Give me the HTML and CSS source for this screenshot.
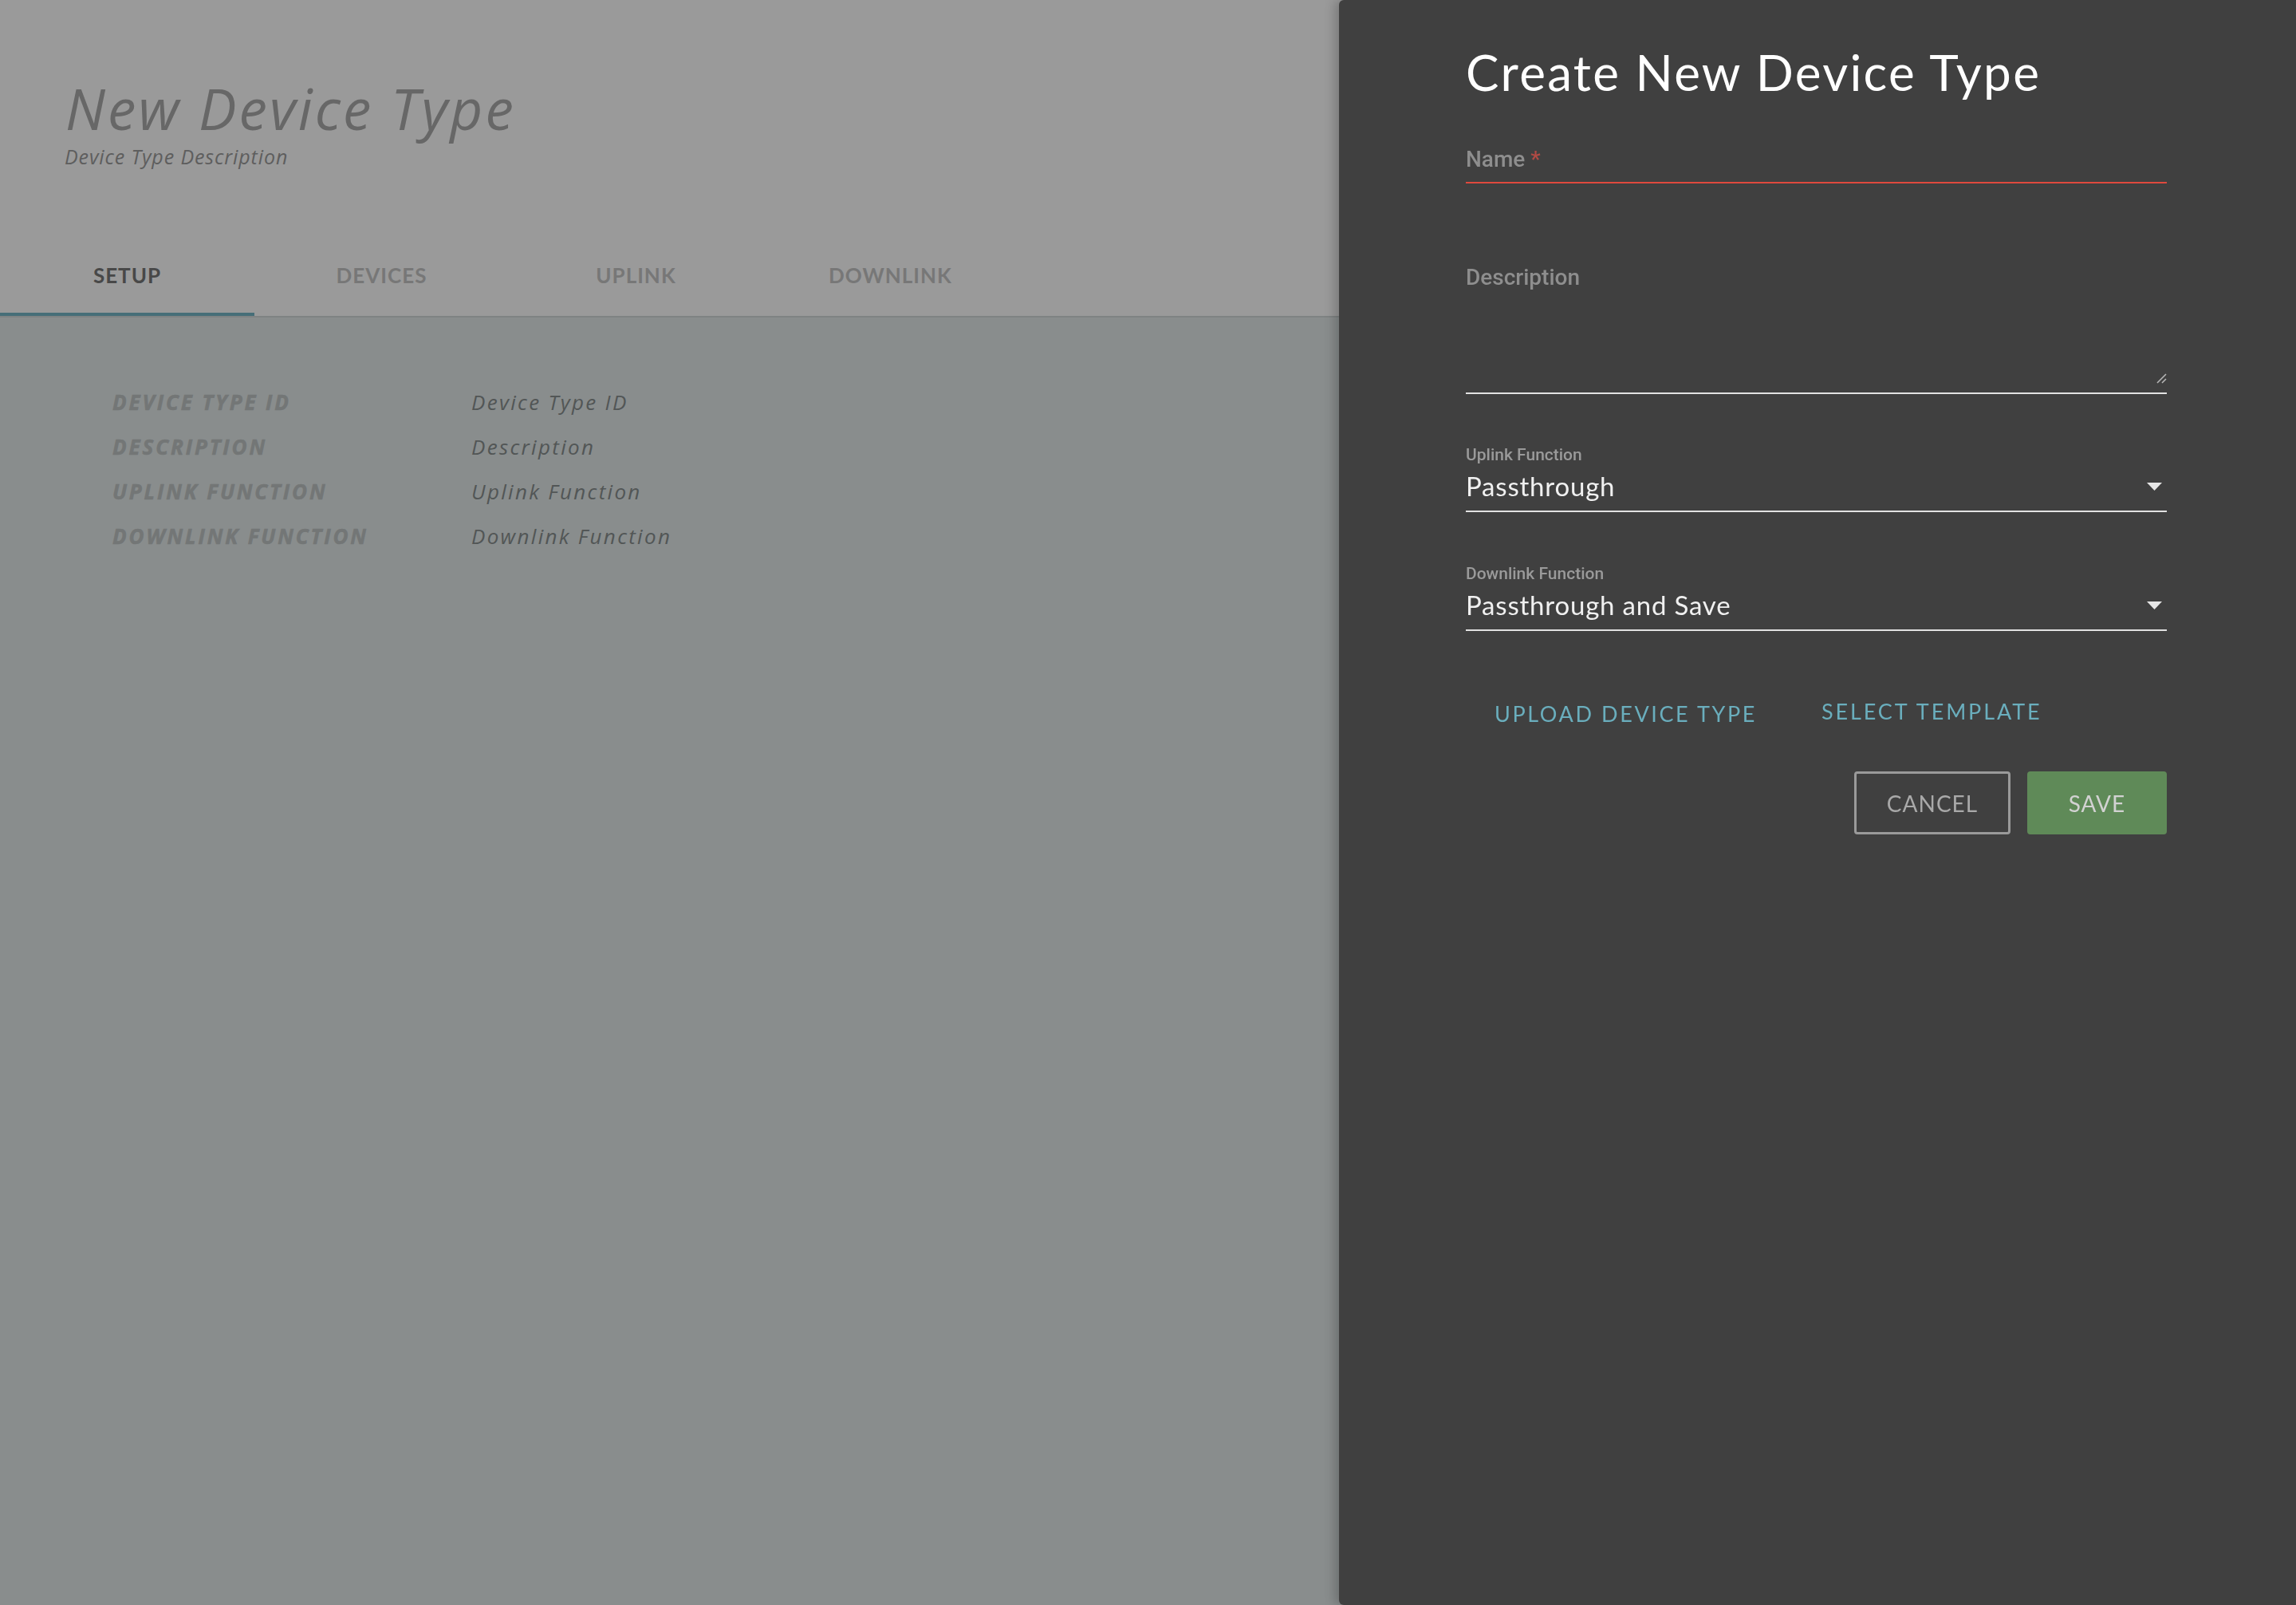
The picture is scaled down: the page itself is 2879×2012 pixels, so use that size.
FILE: index.html
```html
<!DOCTYPE html>
<html>
<head>
<meta charset="utf-8">
<title>New Device Type</title>
<link rel="stylesheet" href="styles.css">
</head>
<body>
<div class="page">
  <header class="header">
    <h1 class="title">New Device Type</h1>
    <div class="subtitle">Device Type Description</div>
    <nav class="tabs">
      <div class="tab active">SETUP</div>
      <div class="tab">DEVICES</div>
      <div class="tab">UPLINK</div>
      <div class="tab">DOWNLINK</div>
    </nav>
  </header>
  <main class="content">
    <div class="details">
      <div class="dlabel">DEVICE TYPE ID</div><div class="dvalue">Device Type ID</div>
      <div class="dlabel">DESCRIPTION</div><div class="dvalue">Description</div>
      <div class="dlabel">UPLINK FUNCTION</div><div class="dvalue">Uplink Function</div>
      <div class="dlabel">DOWNLINK FUNCTION</div><div class="dvalue">Downlink Function</div>
    </div>
  </main>
</div>

<aside class="drawer">
  <h2 class="drawer-title">Create New Device Type</h2>

  <div class="field field-name">
    <div class="flabel">Name<span class="req">*</span></div>
    <div class="finput error"></div>
  </div>

  <div class="field field-desc">
    <div class="flabel">Description</div>
    <div class="farea">
      <svg class="resize" width="14" height="14" viewBox="0 0 14 14"><path d="M13 2 L2 13 M13 8 L8 13" stroke="#b5b5b5" stroke-width="1.6" fill="none"/></svg>
    </div>
  </div>

  <div class="field field-select first">
    <div class="slabel">Uplink Function</div>
    <div class="svalue"><span>Passthrough</span><svg width="19" height="10" viewBox="0 0 19 10"><path d="M0 0 L19 0 L9.5 10 Z" fill="#e6e6e6"/></svg></div>
  </div>

  <div class="field field-select">
    <div class="slabel">Downlink Function</div>
    <div class="svalue"><span>Passthrough and Save</span><svg width="19" height="10" viewBox="0 0 19 10"><path d="M0 0 L19 0 L9.5 10 Z" fill="#e6e6e6"/></svg></div>
  </div>

  <div class="links">
    <div class="link upload">UPLOAD DEVICE TYPE</div>
    <div class="link template">SELECT TEMPLATE</div>
  </div>

  <div class="actions">
    <div class="btn cancel">CANCEL</div>
    <div class="btn save">SAVE</div>
  </div>
</aside>
</body>
</html>
```
FILE: styles.css
```css
html, body {
  margin: 0;
  padding: 0;
  height: 100%;
}
body {
  background: #898d8d;
  font-family: "Lato", "Noto Sans", sans-serif;
  overflow: hidden;
}
.page {
  min-height: 100%;
  display: flex;
  flex-direction: column;
}
.header {
  background: #9a9a9a;
  padding: 88px 0 0 0;
  border-bottom: 2px solid #7f8383;
}
.title {
  margin: 0 0 0 82px;
  font-family: "Open Sans", "Lato", sans-serif;
  font-size: 71px;
  line-height: 96px;
  font-weight: 400;
  font-style: italic;
  letter-spacing: 3.1px;
  color: #676767;
}
.subtitle {
  margin: -4px 0 0 81px;
  font-family: "Open Sans", "Lato", sans-serif;
  font-size: 25px;
  line-height: 33px;
  font-style: italic;
  letter-spacing: 0.9px;
  color: #5e5e5e;
}
.tabs {
  display: flex;
  margin-top: 87px;
}
.tab {
  width: 319px;
  display: flex;
  align-items: center;
  justify-content: center;
  font-size: 26px;
  font-weight: 700;
  letter-spacing: 1px;
  color: #777777;
  border-bottom: 4px solid transparent;
  box-sizing: border-box;
  height: 96px;
  padding-bottom: 2px;
}
.tab.active {
  color: #484848;
  border-bottom-color: #466e78;
}
.content {
  flex: 1;
  padding: 78px 0 0 141px;
}
.details {
  display: grid;
  grid-template-columns: 450px auto;
  width: 900px;
}
.dlabel, .dvalue {
  font-family: "Open Sans", "Lato", sans-serif;
  line-height: 56px;
  font-style: italic;
  white-space: nowrap;
}
.dlabel {
  font-size: 26px;
  font-weight: 700;
  color: #737676;
  letter-spacing: 2.9px;
  -webkit-text-stroke: 0.6px #737676;
}
.dvalue {
  font-size: 26px;
  color: #525656;
  letter-spacing: 2.3px;
}

/* Drawer */
.drawer {
  position: fixed;
  top: 0;
  right: 0;
  bottom: 0;
  width: 1200px;
  box-sizing: border-box;
  background: #404040;
  padding: 54px 162px 0 159px;
  border-radius: 6px 0 0 6px;
  box-shadow: -5px 0 14px rgba(0, 0, 0, 0.22);
  display: flex;
  flex-direction: column;
}
.drawer-title {
  margin: 0;
  font-size: 62px;
  line-height: 72px;
  font-weight: 400;
  color: #ffffff;
  letter-spacing: 2.3px;
}
.field {
  display: flex;
  flex-direction: column;
}
.flabel {
  font-family: "Roboto", "Noto Sans", sans-serif;
  font-weight: 500;
  font-size: 28px;
  line-height: 34px;
  color: #8e8e8e;
}
.req {
  color: #b14a44;
  margin-left: 7px;
}
.field-name {
  margin-top: 57px;
}
.finput {
  height: 11px;
  border-bottom: 2px solid #e0493d;
}
.field-desc {
  margin-top: 101px;
}
.farea {
  position: relative;
  height: 127px;
  border-bottom: 2px solid #e2e2e2;
}
.resize {
  position: absolute;
  right: 0;
  bottom: 11px;
}
.field-select {
  margin-top: 65px;
}
.field-select.first {
  margin-top: 64px;
}
.slabel {
  font-family: "Roboto", "Noto Sans", sans-serif;
  font-weight: 500;
  font-size: 21px;
  line-height: 25px;
  color: #9a9a9a;
}
.svalue {
  margin-top: 6px;
  display: flex;
  align-items: center;
  justify-content: space-between;
  font-size: 33px;
  line-height: 40px;
  letter-spacing: 0.8px;
  color: #f0f0f0;
  padding: 0 6px 11px 0;
  border-bottom: 2px solid #e2e2e2;
}
.svalue svg {
  margin-top: 2px;
}
.links {
  display: flex;
  align-items: flex-start;
  margin-top: 88px;
  padding-left: 36px;
}
.link {
  font-size: 27px;
  line-height: 32px;
  letter-spacing: 2.6px;
  color: #6aaebd;
  white-space: nowrap;
}
.template {
  margin-left: 81px;
  margin-top: -3px;
  letter-spacing: 2.9px;
}
.actions {
  display: flex;
  justify-content: flex-end;
  gap: 21px;
  margin-top: 56px;
}
.btn {
  height: 79px;
  box-sizing: border-box;
  display: flex;
  align-items: center;
  justify-content: center;
  font-size: 28px;
  letter-spacing: 1px;
  border-radius: 4px;
}
.cancel {
  width: 196px;
  border: 3px solid #9a9a9a;
  color: #a9a9a9;
}
.save {
  width: 175px;
  background: #5f8a58;
  color: #d2d2d2;
}
```
